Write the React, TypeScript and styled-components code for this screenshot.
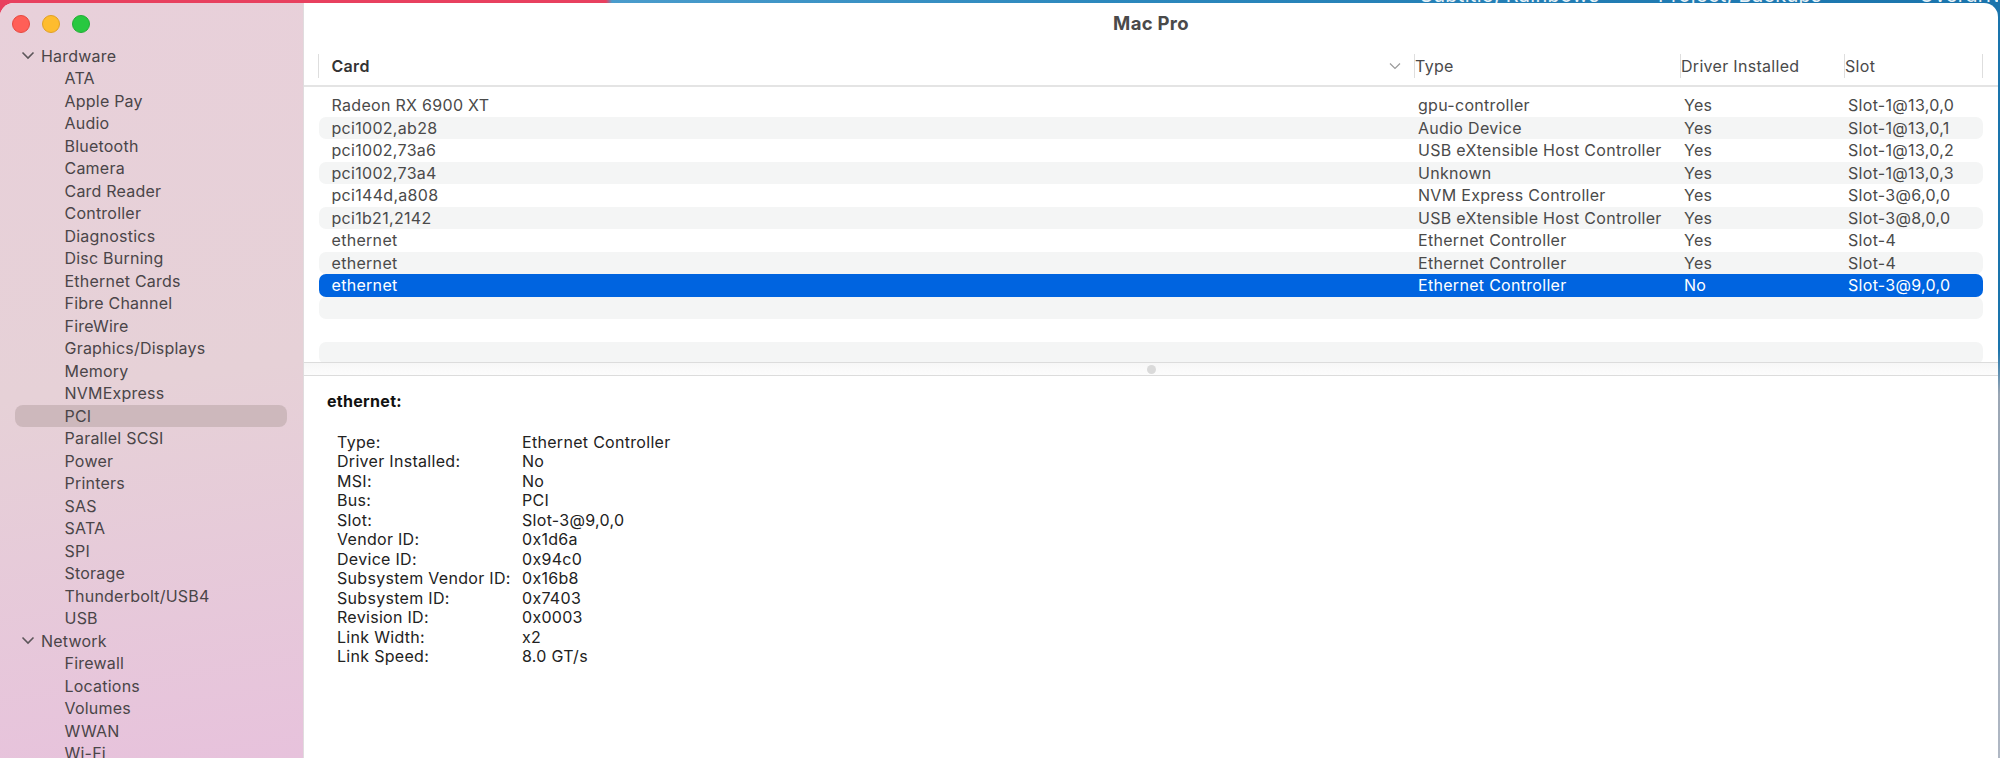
import React from "react";
import styled, { createGlobalStyle } from "styled-components";

const Global = createGlobalStyle`
  html, body { margin: 0; padding: 0; height: 100%; background: #1a7ab0; overflow: hidden; }
  #root { height: 100%; }
  * { box-sizing: border-box; }
`;

const FONT = `Inter, "Liberation Sans", sans-serif`;

const Desktop = styled.div`
  width: 2000px;
  height: 758px;
  padding: 3px 2px 0 0;
  overflow: hidden;
  position: relative;
  background: linear-gradient(90deg, #e8405f 0, #e8405f 606px, #4a9ccc 612px, #2c88bd 1100px, #1a74ac 2000px);
  font-family: ${FONT};
  letter-spacing: 0.3px;
  &::after {
    content: "";
    position: absolute;
    top: 0;
    right: 0;
    width: 2px;
    height: 100%;
    background: linear-gradient(#1a74ac 0, #1a74ac 46%, #9aa6b4 52%, #b0b8c4 100%);
  }
`;

const BackdropLabel = styled.span<{ $x: number }>`
  position: absolute;
  top: -17px;
  left: ${(p) => p.$x}px;
  font-size: 20px;
  line-height: 24px;
  color: #e8f2f8;
  white-space: nowrap;
`;

const Window = styled.div`
  position: relative;
  display: flex;
  width: 1998px;
  height: 755px;
  border-radius: 14px 14px 0 0;
  overflow: hidden;
  background: #fff;
`;

const Sidebar = styled.aside`
  width: 304px;
  flex: none;
  display: flex;
  flex-direction: column;
  background: linear-gradient(172deg, #e8d0da 0%, #e6d1d7 50%, #e7c2dc 100%);
  border-right: 1px solid #e0dcde;
`;

const Lights = styled.div`
  display: flex;
  gap: 12px;
  padding: 12px 0 0 12px;
  height: 41.5px;
  flex: none;
`;

const Light = styled.span<{ $c: string; $b: string }>`
  width: 18px;
  height: 18px;
  border-radius: 50%;
  background: ${(p) => p.$c};
  border: 1px solid ${(p) => p.$b};
`;

const Tree = styled.div`
  display: flex;
  flex-direction: column;
`;

const SideRow = styled.div<{ $group?: boolean; $active?: boolean }>`
  height: 22.5px;
  line-height: 22.5px;
  font-size: 16px;
  letter-spacing: 0.22px;
  color: #4a4548;
  white-space: nowrap;
  display: flex;
  align-items: center;
  margin: 0 16px 0 15px;
  border-radius: 8px;
  padding-left: ${(p) => (p.$group ? "6px" : "49.5px")};
  background: ${(p) => (p.$active ? "#cdb8bc" : "transparent")};
`;

const Chevron = styled.svg`
  width: 14px;
  height: 9px;
  margin-right: 6px;
  flex: none;
`;

const Main = styled.main`
  flex: 1;
  min-width: 0;
  display: flex;
  flex-direction: column;
`;

const Title = styled.div`
  height: 40px;
  flex: none;
  text-align: center;
  line-height: 40px;
  font-size: 18.5px;
  font-weight: 700;
  color: #4a4a4a;
`;

const Header = styled.div`
  height: 44px;
  flex: none;
  display: grid;
  grid-template-columns: 1096px 266px 164px 139px;
  padding: 11px 0 0 14px;
  border-bottom: 2px solid #e4e4e4;
`;

const HeadCell = styled.div<{ $bold?: boolean; $end?: boolean }>`
  height: 24px;
  line-height: 24px;
  font-size: 16px;
  font-weight: ${(p) => (p.$bold ? 600 : 400)};
  color: ${(p) => (p.$bold ? "#333" : "#4a4a4a")};
  border-left: 1px solid #dedede;
  border-right: ${(p) => (p.$end ? "1px solid #dedede" : "none")};
  padding-left: ${(p) => (p.$bold ? "12.5px" : "0")};
  display: flex;
  align-items: center;
  justify-content: space-between;
`;

const SortIcon = styled.svg`
  width: 12px;
  height: 8px;
  margin-right: 13px;
`;

const List = styled.div`
  height: 275px;
  flex: none;
  overflow: hidden;
  padding: 7px 15px 0 15px;
`;

const Row = styled.div<{ $alt: boolean; $sel?: boolean }>`
  height: 22.5px;
  display: grid;
  grid-template-columns: 1095px 266px 164px 1fr;
  align-items: center;
  border-radius: 7px;
  font-size: 16px;
  color: ${(p) => (p.$sel ? "#fff" : "#4a4a4a")};
  background: ${(p) => (p.$sel ? "#0064e0" : p.$alt ? "#f4f5f5" : "#fff")};
`;

const Cell = styled.span<{ $first?: boolean }>`
  padding-left: ${(p) => (p.$first ? "12.5px" : "4px")};
  white-space: nowrap;
`;

const Splitter = styled.div`
  height: 14px;
  flex: none;
  display: flex;
  align-items: center;
  justify-content: center;
  border-top: 1px solid #dcdcdc;
  border-bottom: 1px solid #dcdcdc;
  background: linear-gradient(#f7f7f7, #fcfcfc);
`;

const Dimple = styled.span`
  width: 9px;
  height: 9px;
  border-radius: 50%;
  background: #dadada;
`;

const Detail = styled.section`
  flex: 1;
  padding: 15px 0 0 23px;
  color: #222;
`;

const DetailTitle = styled.div`
  font-size: 16px;
  font-weight: 700;
  line-height: 20px;
  color: #111;
  margin-bottom: 21px;
`;

const Props = styled.dl`
  margin: 0;
  padding-left: 10px;
  display: grid;
  grid-template-columns: 185px 1fr;
  grid-auto-rows: 19.5px;
  align-items: center;
  font-size: 16px;
`;

const Key = styled.dt`
  margin: 0;
  white-space: nowrap;
`;
const Val = styled.dd`
  margin: 0;
  white-space: nowrap;
`;

const hardware = ["ATA","Apple Pay","Audio","Bluetooth","Camera","Card Reader","Controller","Diagnostics","Disc Burning","Ethernet Cards","Fibre Channel","FireWire","Graphics/Displays","Memory","NVMExpress","PCI","Parallel SCSI","Power","Printers","SAS","SATA","SPI","Storage","Thunderbolt/USB4","USB"];
const network = ["Firewall","Locations","Volumes","WWAN","Wi-Fi"];

const rows: string[][] = [
  ["Radeon RX 6900 XT","gpu-controller","Yes","Slot-1@13,0,0"],
  ["pci1002,ab28","Audio Device","Yes","Slot-1@13,0,1"],
  ["pci1002,73a6","USB eXtensible Host Controller","Yes","Slot-1@13,0,2"],
  ["pci1002,73a4","Unknown","Yes","Slot-1@13,0,3"],
  ["pci144d,a808","NVM Express Controller","Yes","Slot-3@6,0,0"],
  ["pci1b21,2142","USB eXtensible Host Controller","Yes","Slot-3@8,0,0"],
  ["ethernet","Ethernet Controller","Yes","Slot-4"],
  ["ethernet","Ethernet Controller","Yes","Slot-4"],
  ["ethernet","Ethernet Controller","No","Slot-3@9,0,0"],
  ["","","",""],["","","",""],["","","",""],
];

const props: [string,string][] = [
  ["Type:","Ethernet Controller"],["Driver Installed:","No"],["MSI:","No"],["Bus:","PCI"],
  ["Slot:","Slot-3@9,0,0"],["Vendor ID:","0x1d6a"],["Device ID:","0x94c0"],
  ["Subsystem Vendor ID:","0x16b8"],["Subsystem ID:","0x7403"],["Revision ID:","0x0003"],
  ["Link Width:","x2"],["Link Speed:","8.0 GT/s"],
];

const Chev = () => (
  <Chevron viewBox="0 0 14 9"><path d="M1.5 1.5 L7 7 L12.5 1.5" fill="none" stroke="#5c565a" strokeWidth="1.6" /></Chevron>
);

export default function App() {
  return (
    <Desktop>
      <Global />
      <BackdropLabel $x={1420}>Subtitle, Rainbows</BackdropLabel>
      <BackdropLabel $x={1658}>Project, Backups</BackdropLabel>
      <BackdropLabel $x={1919}>Overdrive</BackdropLabel>
      <Window>
        <Sidebar>
          <Lights>
            <Light $c="#ff5f57" $b="#e6483f" />
            <Light $c="#febc2e" $b="#e0a024" />
            <Light $c="#28c840" $b="#22ad35" />
          </Lights>
          <Tree>
            <SideRow $group><Chev />Hardware</SideRow>
            {hardware.map((h) => <SideRow key={h} $active={h === "PCI"}>{h}</SideRow>)}
            <SideRow $group><Chev />Network</SideRow>
            {network.map((h) => <SideRow key={h}>{h}</SideRow>)}
          </Tree>
        </Sidebar>
        <Main>
          <Title>Mac Pro</Title>
          <Header>
            <HeadCell $bold>Card<SortIcon viewBox="0 0 12 8"><path d="M1 1.5 L6 6.5 L11 1.5" fill="none" stroke="#9a9a9a" strokeWidth="1.2" /></SortIcon></HeadCell>
            <HeadCell>Type</HeadCell>
            <HeadCell>Driver Installed</HeadCell>
            <HeadCell $end>Slot</HeadCell>
          </Header>
          <List>
            {rows.map((r, i) => (
              <Row key={i} $alt={i % 2 === 1} $sel={i === 8}>
                <Cell $first>{r[0]}</Cell><Cell>{r[1]}</Cell><Cell>{r[2]}</Cell><Cell>{r[3]}</Cell>
              </Row>
            ))}
          </List>
          <Splitter><Dimple /></Splitter>
          <Detail>
            <DetailTitle>ethernet:</DetailTitle>
            <Props>
              {props.map(([k, v]) => (
                <React.Fragment key={k}><Key>{k}</Key><Val>{v}</Val></React.Fragment>
              ))}
            </Props>
          </Detail>
        </Main>
      </Window>
    </Desktop>
  );
}
